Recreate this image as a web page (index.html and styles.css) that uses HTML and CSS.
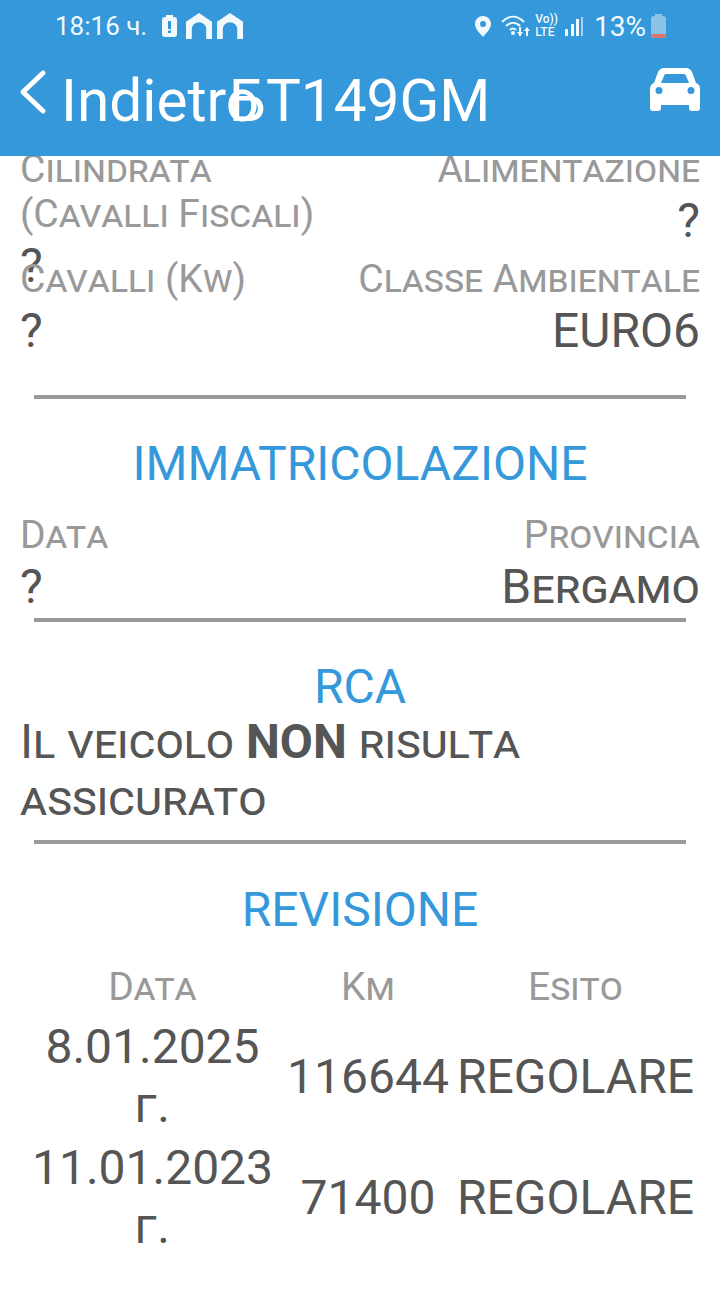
FILE: index.html
```html
<!DOCTYPE html>
<html lang="it">

<head>
    <meta charset="UTF-8">
    <title>Dettaglio veicolo</title>
    <link rel="stylesheet" href="styles.css">
</head>

<body>
    <header class="topbar">
        <div class="status">
            <div class="status-left">
                <span class="clock">18:16 ч.</span>
                <svg class="ico batt" width="15" height="22" viewBox="0 0 15 22"><path fill="#f2f9fd" d="M4 0h7v2h1a3 3 0 0 1 3 3v14a3 3 0 0 1-3 3H3a3 3 0 0 1-3-3V5a3 3 0 0 1 3-3h1z"/><path fill="#3498db" d="M6 6h3v8H6zM6 15.500h3V18H6z"/></svg>
                <svg class="ico" width="26" height="26" viewBox="0 0 27 27"><path fill="#f2f9fd" d="M13.500 0L27 9v18h-6V17a7.500 7.500 0 0 0-15 0v10H0V9z"/></svg>
                <svg class="ico" width="26" height="26" viewBox="0 0 27 27"><path fill="#f2f9fd" d="M13.500 0L27 9v18h-6V17a7.500 7.500 0 0 0-15 0v10H0V9z"/></svg>
            </div>
            <div class="status-right">
                <svg class="ico pin" width="16" height="21" viewBox="0 0 16 21"><path fill="#f2f9fd" fill-rule="evenodd" d="M8 0a8 8 0 0 1 8 8c0 5-5 9-8 13-3-4-8-8-8-13a8 8 0 0 1 8-8zm0 5a3 3 0 1 0 0 6 3 3 0 0 0 0-6z"/></svg>
                <svg class="ico wifi" width="29" height="22" viewBox="0 0 29 22"><g fill="none" stroke="#f2f9fd" stroke-width="2"><path d="M1 7c7-7 15-7 22 0"/><path d="M5 11c4.500-4 10-4 14 0"/><path d="M9 15c2-2 4-2 6 0"/></g><circle cx="12" cy="18" r="2" fill="#f2f9fd"/><path stroke="#f2f9fd" stroke-width="2" d="M19 12v9M26 15v6"/><path fill="#f2f9fd" d="M16 17h6l-3 4zM23 16h6l-3-4z"/></svg>
                <span class="volte">Vo))<br>LTE</span>
                <svg class="ico bars" width="18" height="20" viewBox="0 0 18 20"><path fill="#f2f9fd" d="M0 13h3v7H0zM6 8h3v12H6zM11 3h3v17h-3z"/><path fill="#a8d3ef" d="M16 1h2v19h-2z"/></svg>
                <span class="percent">13%</span>
                <svg class="ico" width="15" height="24" viewBox="0 0 15 24"><path fill="#8cc2e8" d="M4 0h7v2h1a3 3 0 0 1 3 3v16a3 3 0 0 1-3 3H3a3 3 0 0 1-3-3V5a3 3 0 0 1 3-3h1z"/><path fill="#d9776a" d="M0 20h15v1a3 3 0 0 1-3 3H3a3 3 0 0 1-3-3z"/></svg>
            </div>
        </div>
        <div class="navbar">
            <svg class="back" width="28" height="46" viewBox="0 0 28 46"><path fill="none" stroke="#fff" stroke-width="5" stroke-linecap="round" stroke-linejoin="round" d="M24 4L4 23l20 19"/></svg>
            <a class="back-label">Indietro</a>
            <h1 class="plate">БT149GM</h1>
            <svg class="car" width="50" height="44" viewBox="0 0 50 44"><path fill="#fff" fill-rule="evenodd" d="M14 0h22c3 0 5 2 6 4l4 11c3 1 4 3 4 6v19c0 2-1 3-3 3h-5c-2 0-3-1-3-3v-3H11v3c0 2-1 3-3 3H3c-2 0-3-1-3-3V21c0-3 1-5 4-6L8 4c1-2 3-4 6-4zm0 8l-3 7h28l-3-7c0-1-1-2-2-2H16c-1 0-2 1-2 2zM9 19a3.500 3.500 0 1 0 0 7 3.500 3.500 0 0 0 0-7zm32 0a3.500 3.500 0 1 0 0 7 3.500 3.500 0 0 0 0-7z"/></svg>
        </div>
    </header>

    <main class="content">
        <div class="pair pair-top">
            <div class="field">
                <div class="label">Cilindrata<br>(Cavalli Fiscali)</div>
                <div class="value">?</div>
            </div>
            <div class="field right">
                <div class="label">Alimentazione</div>
                <div class="value">?</div>
            </div>
        </div>
        <div class="pair pair-second">
            <div class="field">
                <div class="label">Cavalli (Kw)</div>
                <div class="value">?</div>
            </div>
            <div class="field right">
                <div class="label">Classe Ambientale</div>
                <div class="value">EURO6</div>
            </div>
        </div>
        <hr class="rule">

        <h2 class="section section-reg">IMMATRICOLAZIONE</h2>
        <div class="pair pair-reg">
            <div class="field">
                <div class="label">Data</div>
                <div class="value">?</div>
            </div>
            <div class="field right">
                <div class="label">Provincia</div>
                <div class="value">Bergamo</div>
            </div>
        </div>
        <hr class="rule">

        <h2 class="section section-rca">RCA</h2>
        <p class="notice">Il veicolo <b>NON</b> risulta<br>assicurato</p>
        <hr class="rule">

        <h2 class="section section-rev">REVISIONE</h2>
        <div class="history">
            <div class="label">Data</div>
            <div class="label">Km</div>
            <div class="label">Esito</div>
            <div class="cell">8.01.2025<br>г.</div>
            <div class="cell">116644</div>
            <div class="cell">REGOLARE</div>
            <div class="cell">11.01.2023<br>г.</div>
            <div class="cell">71400</div>
            <div class="cell">REGOLARE</div>
        </div>
    </main>
</body>

</html>
```

FILE: styles.css
```css
html,
body {
    width: 100%;
    height: 100%;
    padding: 0;
    margin: 0;
    overflow: hidden;
    background: #fff;
    font-family: Roboto, "Noto Sans", sans-serif;
}

.topbar {
    position: relative;
    z-index: 1;
    height: 156px;
    background: #3498db;
    color: #fff;
}

.status {
    height: 52px;
    padding: 0 54px 0 55px;
    display: flex;
    justify-content: space-between;
    align-items: center;
    color: #f2f9fd;
}

.status-left,
.status-right {
    display: flex;
    align-items: center;
    gap: 5px;
}

.clock {
    font-size: 26px;
    margin-right: 10px;
}

.percent {
    font-size: 28px;
}

.volte {
    font-size: 12px;
    line-height: 13px;
    font-weight: 500;
}

.ico {
    display: block;
    flex: none;
}

.batt {
    margin-right: 4px;
}

.pin {
    margin-right: 5px;
}

.bars {
    margin: 0 6px 0 2px;
}

.navbar {
    position: relative;
    height: 103px;
    display: flex;
    align-items: center;
}

.back {
    margin-left: 19px;
    margin-top: -24px;
    flex: none;
}

.back-label {
    font-size: 58.500px;
    margin-left: 14px;
    margin-top: -6px;
}

.plate {
    position: absolute;
    left: 229px;
    top: 14px;
    margin: 0;
    font-size: 58.500px;
    font-weight: 400;
    line-height: 70px;
}

.car {
    position: absolute;
    right: 20px;
    top: 16px;
}

.content {
    padding: 0 20px;
    height: 1137px;
    overflow: hidden;
    margin-top: -9px;
}

.pair {
    display: flex;
    justify-content: space-between;
}

.pair-top {
    height: 110px;
}

.pair-second {
    height: 138px;
}

.pair-reg {
    padding-bottom: 2px;
}

.field.right {
    text-align: right;
}

.label {
    color: #999;
    font-size: 39px;
    font-variant: small-caps;
    line-height: 45px;
}

.value {
    color: #555;
    font-size: 48px;
    font-variant: small-caps;
    line-height: 58px;
}

.rule {
    height: 4px;
    margin: 0 14px;
    border: 0;
    background: #999;
}

.section {
    margin: 0;
    color: #3498db;
    font-size: 48px;
    font-weight: 400;
    text-align: center;
    line-height: 56px;
}

.section-reg {
    margin: 37px 0 21px;
}

.section-rca {
    margin: 37px 0 -2px;
}

.section-rev {
    margin: 38px 0 27px;
}

.notice {
    margin: 0 0 13px;
    color: #555;
    font-size: 48px;
    font-variant: small-caps;
    line-height: 57px;
}

.history {
    display: grid;
    grid-template-columns: 265px 166px 249px;
    justify-items: center;
    align-items: center;
    text-align: center;
}

.history .label {
    padding-bottom: 7px;
}

.cell {
    color: #555;
    font-size: 48px;
    font-variant: small-caps;
    line-height: 59px;
    padding: 0 0 3px;
}
```
